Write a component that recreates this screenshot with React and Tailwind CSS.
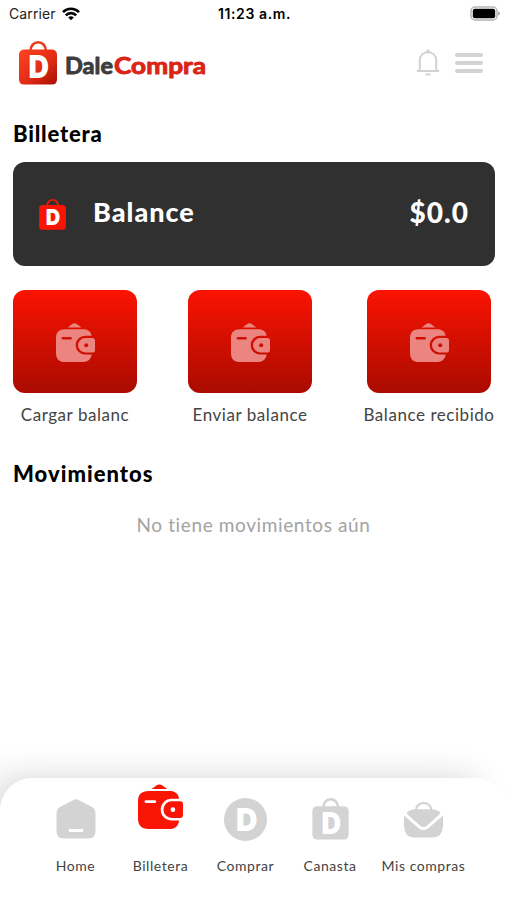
import { useState } from 'react';

function WifiIcon() {
  return (
    <svg width="18" height="14" viewBox="0 0 18 14" fill="none" stroke="#000" strokeWidth="2.6">
      <path d="M1 5.1a11.4 11.4 0 0 1 16 0" />
      <path d="M3.8 8.3a7.4 7.4 0 0 1 10.4 0" />
      <path d="M9 13.3 6.2 10.6a4 4 0 0 1 5.6 0z" fill="#000" stroke="none" />
    </svg>
  );
}

function BatteryIcon() {
  return (
    <svg width="30" height="16" viewBox="0 0 30 16">
      <rect x="1" y="1" width="26" height="13" rx="4" fill="#fff" stroke="#b5b5b5" strokeWidth="1.5" />
      <rect x="2.8" y="2.8" width="22.4" height="9.4" rx="2" fill="#000" />
      <path d="M28.3 5.5q1.6.6 1.6 2t-1.6 2z" fill="#999" />
    </svg>
  );
}

function BellIcon() {
  return (
    <svg width="24" height="28" viewBox="0 0 24 28" fill="none" stroke="#d3d3d3" strokeWidth="2">
      <path d="M.8 22h22.4M3.8 22V11.2a8.2 8.2 0 0 1 16.4 0V22" />
      <path d="M12 1.8v1.4" strokeWidth="3.2" strokeLinecap="round" />
      <path d="M10.3 25.6h3.6" strokeLinecap="round" />
    </svg>
  );
}

function BagIcon({ fill, handle = fill, className }) {
  return (
    <svg className={`overflow-visible ${className}`} viewBox="0 0 38 44">
      <defs>
        <linearGradient id="bagFill" x1="0" y1="0" x2="1" y2="1">
          <stop offset="0" stopColor="#ff4420" />
          <stop offset=".55" stopColor="#e22c16" />
          <stop offset="1" stopColor="#a60e04" />
        </linearGradient>
      </defs>
      <path d="M11.7 10.5V8.8a7.5 7.5 0 0 1 15 0v1.7" fill="none" stroke={handle} strokeWidth="2.6" />
      <rect x="0" y="8.6" width="38" height="35" rx="5" fill={fill} />
      <text x="9.5" y="37.2" fontFamily="Inter, sans-serif" fontWeight="900" fontSize="31" textLength="20.5" lengthAdjust="spacingAndGlyphs" fill="#fff">D</text>
    </svg>
  );
}

function WalletIcon({ className, fill, line }) {
  return (
    <svg className={className} viewBox="0 0 40 40">
      <path d="M12 4.5Q14.5 2.8 16 1.5q3-2.3 6 0 1.5 1.3 4 3z" fill={fill} />
      <path
        d="M9.5 6.3H28c4.8 0 7.8 2.2 8.6 6.9h-6.8a9.6 9.6 0 0 0 0 19.2h6.8c-.8 5-3.8 7.6-8.6 7.6H9.5C3 40 0 37 0 30.500v-15C0 9.300 3 6.300 9.500 6.300z"
        fill={fill}
      />
      <path d="M30 15.4h7.5Q40 15.4 40 18v9.6q0 2.6-2.500 2.600H30a7.400 7.400 0 0 1 0-14.800z" fill={fill} />
      <path d="M7 15.6h8" stroke={line} strokeWidth="2.4" strokeLinecap="round" />
      <circle cx="31" cy="22.8" r="2.1" fill={line} />
    </svg>
  );
}

function HomeIcon() {
  return (
    <svg className="h-10 w-10" viewBox="0 0 40 40">
      <path d="M17 1.2q3-1.7 6 0l13 6.8q3.500 2 3.500 6v18q0 7.500-7.500 7.500H8Q.5 39.500.5 32V14q0-4 3.500-6z" fill="#d3d3d3" />
      <path d="M14 31.5h12" stroke="#fff" strokeWidth="2.8" strokeLinecap="round" />
    </svg>
  );
}

function CoinIcon() {
  return (
    <svg className="h-[43px] w-[43px] overflow-visible" viewBox="0 0 43 43">
      <circle cx="21.5" cy="21.5" r="21.5" fill="#d3d3d3" />
      <text x="12" y="33" fontFamily="Inter, sans-serif" fontWeight="900" fontSize="32" textLength="21.5" lengthAdjust="spacingAndGlyphs" fill="#fff">D</text>
    </svg>
  );
}

function OrdersIcon() {
  return (
    <svg className="h-[37px] w-[39px]" viewBox="0 0 39 37">
      <path d="M12 9.5a7.7 7.7 0 0 1 15.4 0" fill="none" stroke="#d3d3d3" strokeWidth="2.2" />
      <path d="M2.5 12Q6 8.3 11 8.3h17q5 0 8.5 3.7-1 1.500-3 3.200L22.500 25q-3 2.200-6 0l-11-9.800Q3.500 13.500 2.500 12z" fill="#d3d3d3" />
      <path d="M0 14.5l15 13q4.500 3.600 9 0l15-13v11Q38 36.500 29 36.500H10Q1 36.500 0 25.500z" fill="#d3d3d3" />
    </svg>
  );
}

const actions = [
  { label: 'Cargar balanc', margin: '' },
  { label: 'Enviar balance', margin: 'ml-[51px]' },
  { label: 'Balance recibido', margin: 'ml-[55px]' },
];

const tabs = [
  { label: 'Home', width: 'w-[85px]', icon: <HomeIcon />, pad: 'pt-[21px]' },
  { label: 'Billetera', width: 'w-[85px]', icon: <WalletIcon className="h-[45px] w-[45px]" fill="#f91403" line="#fff" />, pad: 'pt-[6px]' },
  { label: 'Comprar', width: 'w-[85px]', icon: <CoinIcon />, pad: 'pt-[20px]' },
  { label: 'Canasta', width: 'w-[84px]', icon: <BagIcon className="h-[42px] w-[37px]" fill="#d3d3d3" />, pad: 'pt-[20px]' },
  { label: 'Mis compras', width: 'w-[103px]', icon: <OrdersIcon />, pad: 'pt-[23px]' },
];

export default function App() {
  const [, setActive] = useState('Billetera');

  return (
    <div className="flex h-[900px] w-[507px] flex-col overflow-hidden bg-white font-[Lato,sans-serif] text-black">
      <div className="grid h-[27px] grid-cols-3 items-center pr-[7px] pl-[9px] font-[Inter,sans-serif] text-[14px]">
        <div className="flex items-center gap-[6px]">
          <span className="tracking-[0.1px] text-[#222]">Carrier</span>
          <WifiIcon />
        </div>
        <span className="text-center font-semibold tracking-[0.6px]">11:23 a.m.</span>
        <div className="flex justify-end">
          <BatteryIcon />
        </div>
      </div>

      <header className="flex h-[73px] items-center justify-between pr-[24px] pl-[19px]">
        <div className="flex items-center">
          <BagIcon className="mb-[2px] h-[44px] w-[38px]" fill="url(#bagFill)" handle="#ee3a1c" />
          <svg className="ml-[6px] h-[34px] w-[148px]" viewBox="0 0 148 34" fontFamily="Lato, sans-serif" fontSize="23" fontWeight="700" strokeWidth="0.9" strokeLinejoin="round">
            <text x="2" y="26.5" textLength="48" lengthAdjust="spacingAndGlyphs" fill="#3c3c3c" stroke="#3c3c3c">Dale</text>
            <text x="51" y="26.5" textLength="92" lengthAdjust="spacingAndGlyphs" fill="#db2416" stroke="#db2416">Compra</text>
          </svg>
        </div>
        <div className="mb-[2px] flex items-center gap-[15px]">
          <BellIcon />
          <button className="flex flex-col gap-1" aria-label="Menu">
            <span className="h-1 w-7 rounded-full bg-[#d3d3d3]" />
            <span className="h-1 w-7 rounded-full bg-[#d3d3d3]" />
            <span className="h-1 w-7 rounded-full bg-[#d3d3d3]" />
          </button>
        </div>
      </header>

      <main className="flex-1 px-[13px]">
        <h1 className="mt-[20px] text-[22px] leading-[28px] font-black tracking-[0.8px]">Billetera</h1>

        <div className="mt-[14px] flex h-[104px] w-[482px] items-center rounded-[12px] bg-[#303030] px-[26px] text-white">
          <BagIcon className="h-[31px] w-[27px]" fill="#f91403" />
          <span className="mb-1 ml-[27px] text-[27px] font-black tracking-[1px]">Balance</span>
          <span className="mb-1 ml-auto text-[28px] font-black tracking-[1px]">$0.0</span>
        </div>

        <div className="mt-[24px] flex">
          {actions.map((action) => (
            <div key={action.label} className={`flex w-[124px] shrink-0 flex-col items-center ${action.margin}`}>
              <div className="flex h-[103px] w-full items-center justify-center rounded-[12px] bg-linear-to-b from-[#fb1302] to-[#aa0b00]">
                <WalletIcon className="mt-[2px] h-[39px] w-[39px]" fill="#ec8580" line="#cf1004" />
              </div>
              <span className="mt-[10px] text-[17px] leading-[24px] tracking-[0.55px] whitespace-nowrap text-[#444]">{action.label}</span>
            </div>
          ))}
        </div>

        <h2 className="mt-[33px] text-[22px] leading-[28px] font-black tracking-[1px]">Movimientos</h2>
        <p className="mt-[24px] text-center text-[19px] leading-[26px] tracking-[0.62px] text-[#a3a3a3]">No tiene movimientos aún</p>
      </main>

      <nav className="flex h-[122px] rounded-t-[32px] bg-white pl-[33px] shadow-[-17px_-12px_32px_-10px_rgba(0,0,0,0.15)]">
        {tabs.map((tab) => (
          <button key={tab.label} onClick={() => setActive(tab.label)} className={`flex flex-col items-center ${tab.width}`}>
            <span className={`h-[77px] ${tab.pad}`}>{tab.icon}</span>
            <span className="text-[14px] leading-[22px] tracking-[0.55px] whitespace-nowrap text-[#444]">{tab.label}</span>
          </button>
        ))}
      </nav>
    </div>
  );
}
